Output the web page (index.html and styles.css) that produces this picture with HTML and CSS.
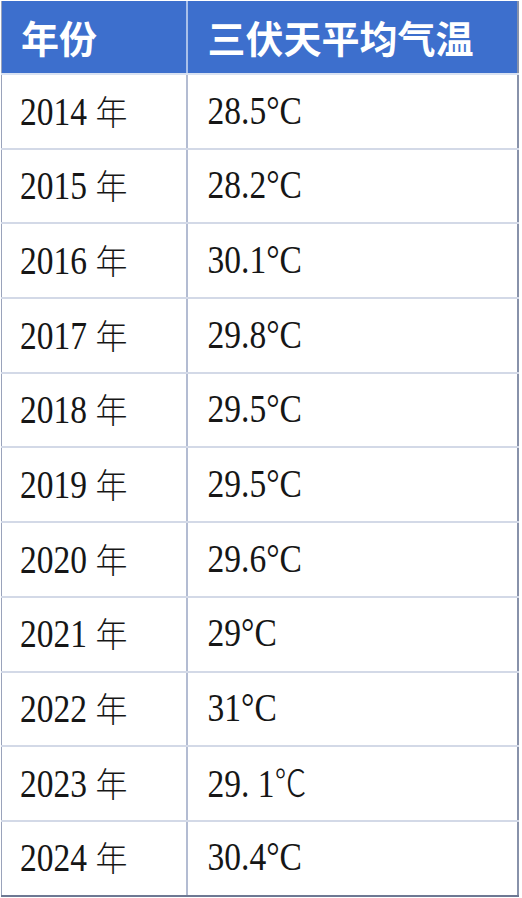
FILE: index.html
```html
<!DOCTYPE html>
<html lang="zh">
<head>
<meta charset="utf-8">
<link rel="stylesheet" href="styles.css">
</head>
<body>
<table class="data">
  <thead>
    <tr><th class="c1">年份</th><th class="c2">三伏天平均气温</th></tr>
  </thead>
  <tbody>
    <tr><td class="c1"><span class="num">2014</span> <span class="cjk">年</span></td><td class="c2"><span class="num">28.5°C</span></td></tr>
    <tr><td class="c1"><span class="num">2015</span> <span class="cjk">年</span></td><td class="c2"><span class="num">28.2°C</span></td></tr>
    <tr><td class="c1"><span class="num">2016</span> <span class="cjk">年</span></td><td class="c2"><span class="num">30.1°C</span></td></tr>
    <tr><td class="c1"><span class="num">2017</span> <span class="cjk">年</span></td><td class="c2"><span class="num">29.8°C</span></td></tr>
    <tr><td class="c1"><span class="num">2018</span> <span class="cjk">年</span></td><td class="c2"><span class="num">29.5°C</span></td></tr>
    <tr><td class="c1"><span class="num">2019</span> <span class="cjk">年</span></td><td class="c2"><span class="num">29.5°C</span></td></tr>
    <tr><td class="c1"><span class="num">2020</span> <span class="cjk">年</span></td><td class="c2"><span class="num">29.6°C</span></td></tr>
    <tr><td class="c1"><span class="num">2021</span> <span class="cjk">年</span></td><td class="c2"><span class="num">29°C</span></td></tr>
    <tr><td class="c1"><span class="num">2022</span> <span class="cjk">年</span></td><td class="c2"><span class="num">31°C</span></td></tr>
    <tr><td class="c1"><span class="num">2023</span> <span class="cjk">年</span></td><td class="c2"><span class="num">29. 1<span class="cel">℃</span></span></td></tr>
    <tr><td class="c1"><span class="num">2024</span> <span class="cjk">年</span></td><td class="c2"><span class="num">30.4°C</span></td></tr>
  </tbody>
</table>
</body>
</html>
```

FILE: styles.css
```css
html, body {
  margin: 0;
  padding: 0;
  background: #ffffff;
}
body {
  padding: 1px 0 0 1px;
}
.data {
  border-collapse: collapse;
  width: 518px;
  table-layout: fixed;
  border-right: 2px solid #8892aa;
  border-bottom: 2px solid #6d7893;
  border-left: 1px solid #9aa3bb;
}
.data th, .data td {
  padding: 0;
  text-align: left;
  vertical-align: middle;
}
.data .c1 {
  width: 185px;
  padding-left: 18px;
  box-sizing: border-box;
}
.data .c2 {
  padding-left: 20px;
}
.data thead tr {
  height: 73px;
  background: #3d6fcd;
}
.data th {
  color: #ffffff;
  font-family: "Noto Sans CJK SC", sans-serif;
  font-weight: 700;
  font-size: 38px;
  line-height: 1;
  border-bottom: 2px solid #d9e2f2;
}
.data th.c1 {
  padding-left: 19px;
  border-right: 2px solid #a9c0ea;
}
.data tbody tr {
  height: 74.7px;
}
.data td {
  font-family: "Liberation Serif", "Noto Sans CJK SC", serif;
  font-size: 33.5px;
  color: #161616;
  line-height: 1;
  border-bottom: 2px solid #d3d9e7;
}
.data td.c1 {
  border-right: 2px solid #b3bcd2;
}
.data tbody tr:last-child td {
  border-bottom: 2px solid #6d7893;
}
.num {
  display: inline-block;
  transform: scaleY(1.17);
  transform-origin: 50% 60%;
}
.cjk {
  font-family: "Noto Sans CJK SC", sans-serif;
  font-size: 32px;
  font-weight: 300;
  display: inline-block;
  transform: scaleY(1.05);
}
.cel {
  font-family: "Noto Sans CJK SC", sans-serif;
  font-size: 32px;
  font-weight: 300;
}
```
